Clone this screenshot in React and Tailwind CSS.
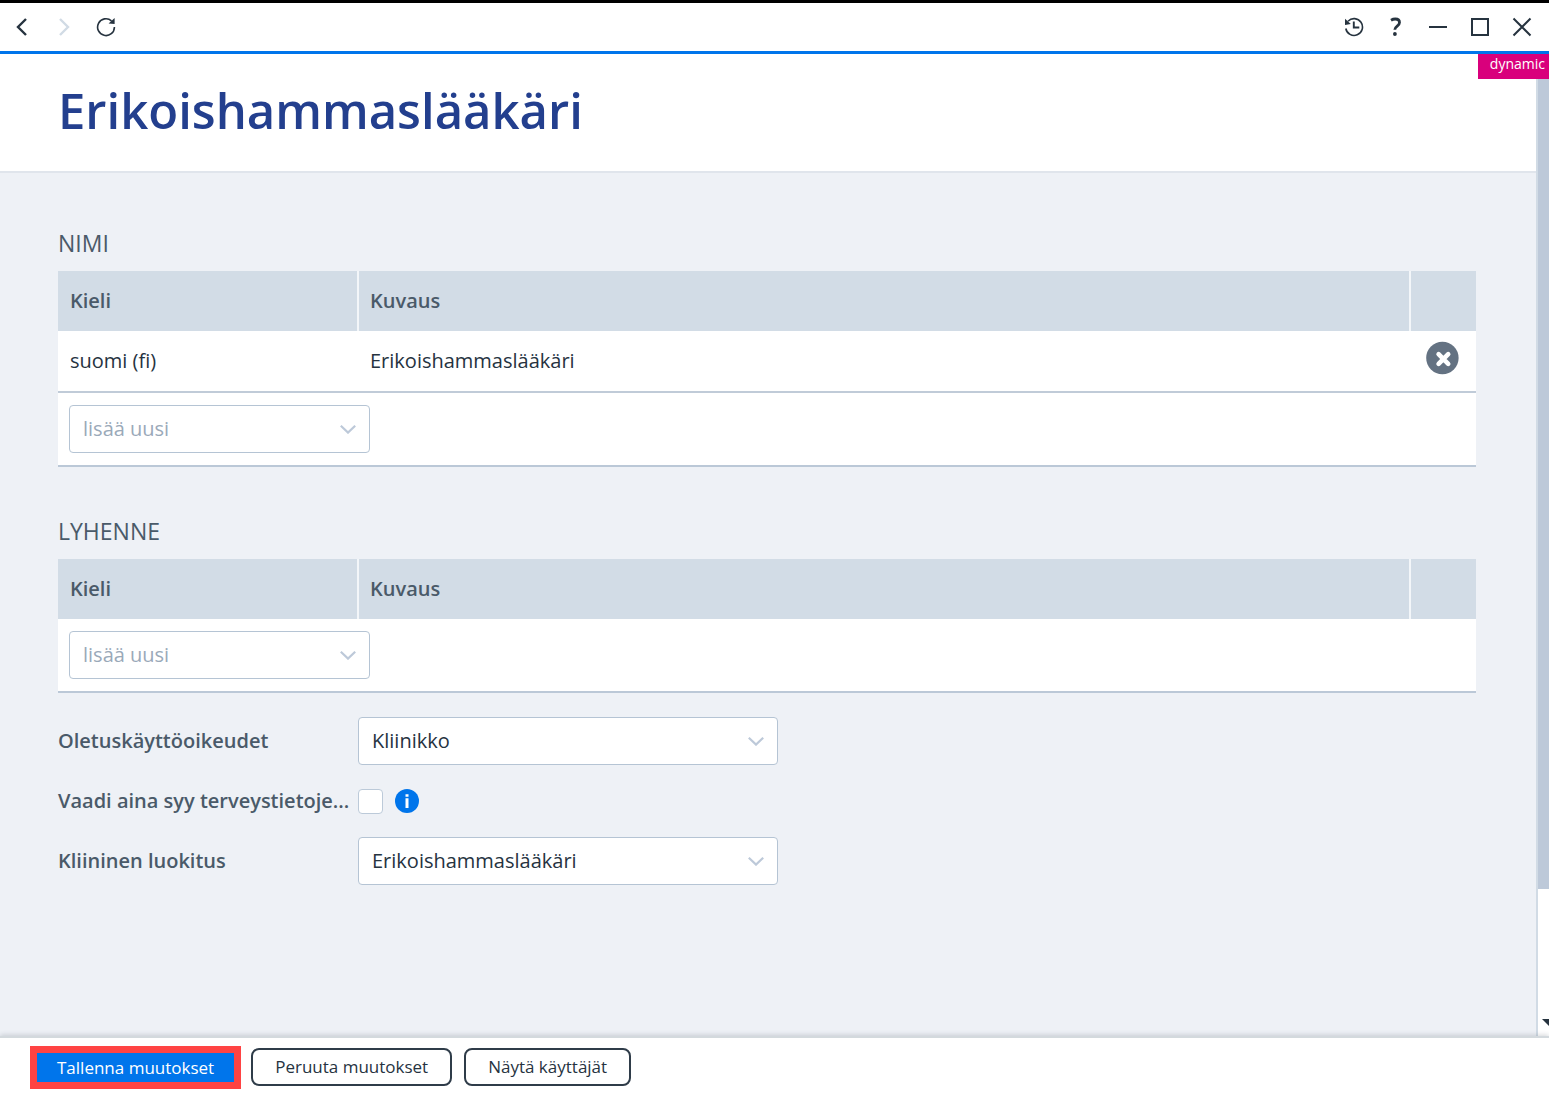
import { useState } from "react";

export default function App() {
  const [role, setRole] = useState("Kliinikko");
  const [category, setCategory] = useState("Erikoishammaslääkäri");
  const [requireReason, setRequireReason] = useState(false);

  return (
    <div className="flex h-screen flex-col border-t-[3px] border-black bg-white font-['Open_Sans',sans-serif] text-xl text-[#26333f]">
      <TitleBar />

      <div className="relative flex min-h-0 flex-1">
        <main className="flex-1 overflow-hidden bg-[#eef1f6]">
          <header className="border-b-2 border-[#e0e5ec] bg-white px-[58px] pt-5 pb-[25px]">
            <h1 className="text-[49px] leading-[72px] font-semibold text-[#233f8e]">
              Erikoishammaslääkäri
            </h1>
          </header>

          <div className="flex flex-col pt-[54px] pr-[60px] pl-[58px]">
            <LanguageTable
              title="NIMI"
              rows={[{ language: "suomi (fi)", text: "Erikoishammaslääkäri" }]}
            />
            <LanguageTable title="LYHENNE" rows={[]} />

            <form className="-mt-6 flex flex-col gap-3">
              <Field id="role" label="Oletuskäyttöoikeudet">
                <Select
                  id="role"
                  value={role}
                  options={["Kliinikko"]}
                  onChange={setRole}
                  className="w-[420px]"
                />
              </Field>
              <Field id="reason" label="Vaadi aina syy terveystietoje...">
                <input
                  id="reason"
                  type="checkbox"
                  checked={requireReason}
                  onChange={(e) => setRequireReason(e.target.checked)}
                  className="size-[25px] appearance-none rounded border border-[#bccad9] bg-white checked:bg-[#0075eb]"
                />
                <InfoIcon />
              </Field>
              <Field id="category" label="Kliininen luokitus">
                <Select
                  id="category"
                  value={category}
                  options={["Erikoishammaslääkäri"]}
                  onChange={setCategory}
                  className="w-[420px]"
                />
              </Field>
            </form>
          </div>
        </main>

        {/* scrollbar */}
        <div className="flex w-[13px] flex-col justify-between overflow-hidden border-l-2 border-[#d1dbe5] bg-white">
          <div className="h-[85%] bg-[#bdc9d9]" />
          <svg viewBox="0 0 14 7" className="mb-2.5 ml-1 h-[7px] w-3.5 shrink-0">
            <path d="M0 0h14L7 7z" fill="#26333f" />
          </svg>
        </div>

        <span className="absolute top-0 right-0 h-[25px] bg-[#d9007c] pr-1 pl-3 text-sm leading-5 text-white">
          dynamic
        </span>
      </div>

      <footer className="relative flex h-[60px] shrink-0 items-center gap-3 border-t-2 border-[#d3d9dd] px-[30px] text-[17px] shadow-[0_-1px_5px_rgba(38,51,63,0.2)]">
        <button
          type="button"
          className="-mr-0.5 border-[7px] border-[#ff4343] bg-[#0075eb] px-5 leading-[29px] text-white"
        >
          Tallenna muutokset
        </button>
        <FooterButton>Peruuta muutokset</FooterButton>
        <FooterButton>Näytä käyttäjät</FooterButton>
      </footer>
    </div>
  );
}

function TitleBar() {
  return (
    <nav className="flex h-[51px] shrink-0 items-center border-b-[3px] border-[#0075eb] pr-1.5 pl-px">
      <BarButton label="Takaisin">
        <path d="M14 2L6 10l8 8" strokeWidth="2.4" />
      </BarButton>
      <BarButton label="Eteenpäin">
        <path d="M6 2l8 8-8 8" stroke="#d1dbe5" strokeWidth="2.4" />
      </BarButton>
      <BarButton label="Päivitä">
        <path d="M18.4 10A8.4 8.4 0 1 1 15.5 3.8" strokeWidth="1.6" />
        <path d="M18.6 1v6l-6-.6z" fill="#26333f" stroke="none" />
      </BarButton>
      <div className="flex-1" />
      <BarButton label="Historia">
        <path d="M1.8 11.5A8.4 8.4 0 1 0 4 4.2" strokeWidth="1.6" />
        <path d="M1 1.8v6.2l5.8-1z" fill="#26333f" stroke="none" />
        <path d="M9.8 4.5v6h5.5" strokeWidth="1.9" />
      </BarButton>
      <BarButton label="Ohje">
        <path
          d="M5 3.2C6.4 2.4 7.9 2 9.3 2c2.7 0 4.2 1.3 4.2 3.4 0 3.7-4.7 3.6-4.7 7.4"
          strokeWidth="2.8"
        />
        <circle cx="8.9" cy="17" r="1.9" fill="#26333f" stroke="none" />
      </BarButton>
      <BarButton label="Pienennä">
        <path d="M1 10h18" strokeWidth="2" />
      </BarButton>
      <BarButton label="Suurenna">
        <path d="M2 2h16v16H2z" strokeWidth="2" />
      </BarButton>
      <BarButton label="Sulje">
        <path d="M1.5 1.5l17 17M18.5 1.5l-17 17" strokeWidth="2" />
      </BarButton>
    </nav>
  );
}

function BarButton({ label, children }) {
  return (
    <button
      type="button"
      aria-label={label}
      className="flex h-full w-[42px] items-center justify-center"
    >
      <svg viewBox="0 0 20 20" fill="none" stroke="#26333f" className="size-5">
        {children}
      </svg>
    </button>
  );
}

function LanguageTable({ title, rows }) {
  const [language, setLanguage] = useState("lisää uusi");

  return (
    <section className="mb-12">
      <h2 className="mb-3 text-[23px] leading-8 text-[#4a5a69]">{title}</h2>
      <table className="w-full table-fixed border-separate border-spacing-0 bg-white text-left">
        <thead className="bg-[#d2dce6] text-[#4a5a69]">
          <tr className="h-[60px]">
            <th className="w-[301px] border-r-2 border-[#f3f6f9] px-3 font-semibold">
              Kieli
            </th>
            <th className="border-r-2 border-[#f3f6f9] px-[11px] font-semibold">
              Kuvaus
            </th>
            <th className="w-[65px]" />
          </tr>
        </thead>
        <tbody>
          {rows.map((row) => (
            <tr key={row.language} className="h-[62px]">
              <td className="border-b-2 border-[#c0cbd8] px-3">{row.language}</td>
              <td className="border-b-2 border-[#c0cbd8] px-[11px]">{row.text}</td>
              <td className="border-b-2 border-[#c0cbd8]">
                <button
                  type="button"
                  aria-label="Poista"
                  className="mb-1.5 ml-3.5 block"
                >
                  <svg viewBox="0 0 34 34" className="size-[34px]">
                    <circle cx="17.4" cy="17" r="16.2" fill="#647282" />
                    <path
                      d="M13.6 13.2l9.6 9.6M23.2 13.2l-9.6 9.6"
                      stroke="#fff"
                      strokeWidth="4.6"
                      strokeLinecap="round"
                    />
                  </svg>
                </button>
              </td>
            </tr>
          ))}
          <tr>
            <td colSpan={3} className="border-b-2 border-[#bbc8d7] px-[11px] py-3">
              <Select
                label="Lisää uusi kieli"
                value={language}
                options={["lisää uusi"]}
                onChange={setLanguage}
                className="w-[301px] text-[#9aa9b9]"
              />
            </td>
          </tr>
        </tbody>
      </table>
    </section>
  );
}

function Field({ id, label, children }) {
  return (
    <div className="flex h-12 items-center">
      <label
        htmlFor={id}
        className="w-[300px] shrink-0 font-semibold whitespace-nowrap text-[#4a5a69]"
      >
        {label}
      </label>
      {children}
    </div>
  );
}

function Select({ id, label, value, options, onChange, className }) {
  return (
    <div className={`relative ${className}`}>
      <select
        id={id}
        aria-label={label}
        value={value}
        onChange={(e) => onChange(e.target.value)}
        className="block h-12 w-full appearance-none rounded border border-[#b5c4d4] bg-white px-[13px]"
      >
        {options.map((o) => (
          <option key={o}>{o}</option>
        ))}
      </select>
      <svg
        viewBox="0 0 16 9"
        fill="none"
        stroke="#bdc9d9"
        strokeWidth="2.2"
        className="pointer-events-none absolute top-5 right-3.5 h-[9px] w-4"
      >
        <path d="M.8.8L8 7.6 15.2.8" />
      </svg>
    </div>
  );
}

function InfoIcon() {
  return (
    <svg viewBox="0 0 24 24" className="ml-3 size-6">
      <circle cx="12" cy="12" r="12" fill="#0075eb" />
      <path d="M10.5 9.3h3V19h-3zM10.5 5.2h3v2.6h-3z" fill="#fff" />
    </svg>
  );
}

function FooterButton({ children }) {
  return (
    <button
      type="button"
      className="h-[38px] rounded-lg border-2 border-[#2f3c49] bg-white px-[22px]"
    >
      {children}
    </button>
  );
}
